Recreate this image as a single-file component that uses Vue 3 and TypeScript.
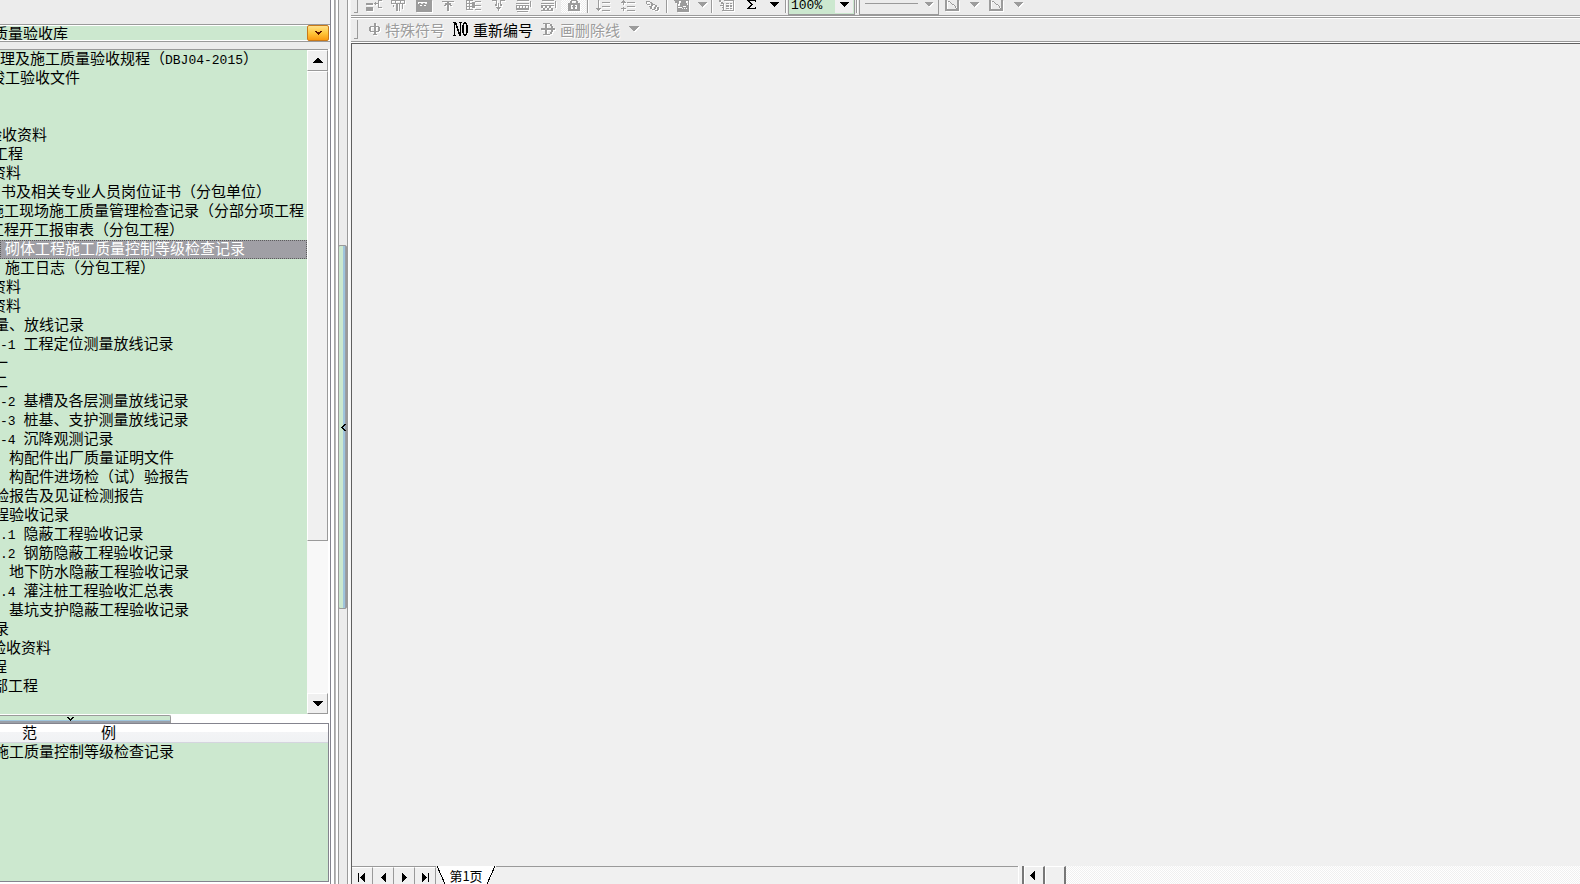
<script setup lang="ts">
import { computed, ref } from 'vue'

interface TreeRow {
  text: string
  indent: number
}

interface Part {
  text: string
  latin: boolean
}

const rows: TreeRow[] = [
  { text: '理及施工质量验收规程（DBJ04-2015）', indent: 0 },
  { text: '竣工验收文件', indent: -10 },
  { text: '', indent: 0 },
  { text: '', indent: 0 },
  { text: '验收资料', indent: -13 },
  { text: '工程', indent: -7 },
  { text: '资料', indent: -9 },
  { text: '书及相关专业人员岗位证书（分包单位）', indent: 1 },
  { text: '施工现场施工质量管理检查记录（分部分项工程', indent: -11 },
  { text: '工程开工报审表（分包工程）', indent: -11 },
  { text: '砌体工程施工质量控制等级检查记录', indent: 5 },
  { text: '施工日志（分包工程）', indent: 5 },
  { text: '资料', indent: -9 },
  { text: '资料', indent: -9 },
  { text: '量、放线记录', indent: -6 },
  { text: '-1 工程定位测量放线记录', indent: 0 },
  { text: '一', indent: -7 },
  { text: '二', indent: -7 },
  { text: '-2 基槽及各层测量放线记录', indent: 0 },
  { text: '-3 桩基、支护测量放线记录', indent: 0 },
  { text: '-4 沉降观测记录', indent: 0 },
  { text: '构配件出厂质量证明文件', indent: 9 },
  { text: '构配件进场检（试）验报告', indent: 9 },
  { text: '验报告及见证检测报告', indent: -6 },
  { text: '程验收记录', indent: -6 },
  { text: '.1 隐蔽工程验收记录', indent: 0 },
  { text: '.2 钢筋隐蔽工程验收记录', indent: 0 },
  { text: '地下防水隐蔽工程验收记录', indent: 9 },
  { text: '.4 灌注桩工程验收汇总表', indent: 0 },
  { text: '基坑支护隐蔽工程验收记录', indent: 9 },
  { text: '录', indent: -6 },
  { text: '验收资料', indent: -9 },
  { text: '程', indent: -8 },
  { text: '部工程', indent: -7 },
]

const selected = ref(10)

function split(text: string): Part[] {
  return (text.match(/[\x20-\x7e]+|[^\x20-\x7e]+/g) ?? []).map((t) => ({
    text: t,
    latin: /^[\x20-\x7e]/.test(t),
  }))
}

const tree = computed(() => rows.map((r) => ({ ...r, parts: split(r.text) })))

/* Toolbar glyphs on a 16 x 12 grid */
const editTools = [
  { name: '插入列', d: 'M0 3h7v2H0zM0 7h7v4H0zM8 3h4v1H8zM9 2h1v3H9zM12 0h1v8h-1zM13 0h3v1h-3zM13 7h3v1h-3z' },
  { name: '插入行', d: 'M0 0h14v1H0zM0 3h14v1H0zM0 0h1v4H0zM4 0h1v4H4zM9 0h1v4H9zM13 0h1v4h-1zM5 4h2v7H5zM8 4h1v7H8zM11 4h1v5h-1zM2 5h1v2H2z' },
  { name: '单元格', d: 'M0 0h16v2H0zM0 2h2v2h1V3h2v1h2V3h2v1h2V2h5v10H0zM4 5v1h2V5zM8 5v1h2V5z' },
  { name: '上移', d: 'M1 1h12v1H1zM6 2h2v9H6zM4 3h2v2H4zM8 3h2v2H8zM3 5h2v1H3zM9 5h2v1H9z' },
  { name: '左移', d: 'M0 0h1v10H0zM0 0h7v1H0zM0 3h7v1H0zM0 6h7v1H0zM0 9h7v1H0zM3 0h1v10H3zM6 2h3v6H6zM9 1h6v1H9zM9 5h6v1H9zM9 9h6v1H9z' },
  { name: '下移', d: 'M1 0h5v1H1zM9 0h5v1H9zM5 0h1v5H5zM9 0h1v5H9zM7 3h1v8H7zM5 7h5v1H5zM6 8h3v1H6zM4 4h2v2H4zM9 4h2v2H9z' },
  { name: '上方插入', d: 'M1 0h12v1H1zM0 3h13v1H0zM0 5h13v1H0zM0 6h1v4H0zM3 6h1v4H3zM6 6h1v4H6zM9 6h1v4H9zM12 5h1v5h-1zM0 8h12v2H0zM14 1h1v6h-1zM1 11h11v1H1z' },
  { name: '下方插入', d: 'M1 0h12v1H1zM0 3h13v1H0zM0 5h13v1H0zM0 6h2v2H0zM4 6h2v2H4zM8 6h2v2H8zM2 8h2v2H2zM6 8h2v2H6zM10 8h2v2h-2zM0 10h12v1H0zM14 1h1v7h-1z' },
  { name: '锁定', d: 'M5 0h6v1H5zM4 1h2v2H4zM10 1h2v2h-2zM2 3h12v2H2zM2 5h3v4H2zM11 5h3v4h-3zM2 9h12v2H2zM7 5h2v4H7zM6 6h4v1H6z' },
]

const listTools = [
  { name: '降序', d: 'M3 0h1v11H3zM1 8h5v1H1zM2 9h3v1H2zM7 2h8v1H7zM7 6h8v1H7zM7 10h8v1H7z' },
  { name: '升序', d: 'M3 0h1v5H3zM1 2h5v1H1zM2 1h3v1H2zM3 7h1v4H3zM1 8h5v1H1zM7 2h8v1H7zM7 6h8v1H7zM7 10h8v1H7z' },
  { name: '链接', d: 'M1 1h4v1H1zM1 2h1v2H1zM5 2h2v1H5zM2 4h3v1H2zM6 3h2v3H6zM4 6h3v1H4zM8 4h2v1H8zM5 7h2v2H5zM10 5h2v2h-2zM7 9h3v1H7zM12 7h2v3h-2zM9 7h2v2H9zM10 10h3v1h-3z' },
]
</script>

<template>
  <div class="app">
    <aside class="side">
      <header class="library">
        <label class="sr" for="library">资料库</label>
        <select id="library" class="library-select">
          <option>质量验收库</option>
        </select>
        <button class="library-drop" aria-label="展开">
          <svg width="7" height="4" viewBox="0 0 7 4"><path d="M0 0h2v1h3V0h2v1H6v1H5v1H4v1H3V3H2V2H1V1H0z" /></svg>
        </button>
      </header>

      <section class="tree">
        <ul class="rows">
          <li
            v-for="(row, i) in tree"
            :key="i"
            class="row"
            :class="{ selected: i === selected }"
            @click="selected = i"
          >
            <span class="row-text" :style="{ marginLeft: row.indent + 'px' }"><span
              v-for="(p, k) in row.parts"
              :key="k"
              :class="{ latin: p.latin }"
            >{{ p.text }}</span></span>
          </li>
        </ul>
        <div class="scroll">
          <button class="scroll-btn" aria-label="向上滚动">
            <svg width="10" height="5" viewBox="0 0 10 5"><path d="M4 0h2v1h1v1h1v1h1v1h1v1H0V4h1V3h1V2h1V1h1z" /></svg>
          </button>
          <div class="scroll-thumb"></div>
          <div class="scroll-track"></div>
          <button class="scroll-btn" aria-label="向下滚动">
            <svg width="10" height="5" viewBox="0 0 10 5"><path d="M0 0h10v1H9v1H8v1H7v1H6v1H4V4H3V3H2V2H1V1H0z" /></svg>
          </button>
        </div>
      </section>

      <div class="h-split">
        <button class="h-grip" aria-label="折叠范例">
          <svg width="7" height="4" viewBox="0 0 7 4"><path d="M0 0h2v1h1v1h1V1h1V0h2v1H6v1H5v1H4v1H3V3H2V2H1V1H0z" /></svg>
        </button>
      </div>

      <section class="sample">
        <h2 class="sample-head"><span>范</span><span>例</span></h2>
        <p class="sample-row"><span>施工质量控制等级检查记录</span></p>
      </section>
    </aside>

    <div class="v-split">
      <button class="v-grip" aria-label="折叠侧栏">
        <svg width="5" height="7" viewBox="0 0 5 7"><path d="M3 0h2v1H4v1H3v1H2v1h1v1h1v1h1v1H3V6H2V5H1V4H0V3h1V2h1V1h1z" /></svg>
      </button>
    </div>

    <main class="main">
      <div class="bar top-bar">
        <i class="handle"></i>
        <button v-for="t in editTools" :key="t.name" class="tool" :class="{ dither: t.name === '锁定' }" :aria-label="t.name">
          <svg class="emboss" width="16" height="12" viewBox="0 0 16 12"><path :d="t.d" /></svg>
        </button>
        <i class="sep"></i>
        <button v-for="t in listTools" :key="t.name" class="tool" :aria-label="t.name">
          <svg class="emboss" width="16" height="12" viewBox="0 0 16 12"><path :d="t.d" /></svg>
        </button>
        <i class="sep"></i>
        <button class="tool" aria-label="图片">
          <svg class="emboss" width="16" height="12" viewBox="0 0 16 12">
            <path d="M0 0h3v1H0zM1 1h2v2H1zM3 0h12v1H3zM3 1h2v3H3zM7 1h5v2H7zM14 1h1v11h-1zM3 4h1v8H3zM6 3h7v3H6zM12 5h2v3h-2zM4 6h5v1H4zM4 8h3v1H4zM8 7h4v1H8zM7 8h1v1H7zM9 8h1v1H9zM11 8h1v1h-1zM13 8h1v1h-1zM3 9h12v3H3z" />
          </svg>
        </button>
        <button class="drop" aria-label="图片选项">
          <svg class="emboss" width="10" height="5" viewBox="0 0 10 5"><path d="M0 0h10L5 5z" /></svg>
        </button>
        <i class="sep"></i>
        <button class="tool" aria-label="表单">
          <svg class="emboss" width="16" height="12" viewBox="0 0 16 12">
            <path d="M5 0h10v1H5zM14 0h1v11h-1zM3 10h12v1H3zM0 0h2v2H0zM2 2h2v2H2zM1 5h4v1H1zM4 3h1v7H4zM3 7h2v1H3zM7 3h3v1H7zM11 3h2v1h-2zM7 5h3v2H7zM11 5h2v2h-2zM7 8h3v1H7zM11 8h2v1h-2z" />
          </svg>
        </button>
        <button class="tool" aria-label="求和">
          <svg width="10" height="9" viewBox="0 0 10 9"><path d="M0 0h9v2H8V1H3v1h1v1h1v1h1v1H5v1H4v1H3v1h5V7h1v2H0V8h1V7h1V6h1V5h1V4H3V3H2V2H1V1H0z" /></svg>
        </button>
        <button class="drop wide" aria-label="求和选项">
          <svg width="10" height="5" viewBox="0 0 10 5"><path d="M0 0h10L5 5z" /></svg>
        </button>
        <i class="sep"></i>
        <div class="zoom">
          <label class="sr" for="zoom">显示比例</label>
          <select id="zoom" class="zoom-select"><option>100%</option></select>
          <span class="zoom-drop"><svg width="10" height="5" viewBox="0 0 10 5"><path d="M0 0h10L5 5z" /></svg></span>
        </div>
        <i class="sep"></i>
        <button class="line-style" aria-label="线型">
          <i class="line"></i>
          <svg class="emboss" width="9" height="5" viewBox="0 0 9 5"><path d="M0 0h9L5 5z" /></svg>
        </button>
        <template v-for="n in ['斜线', '反斜线']" :key="n">
          <button class="tool diagonal" :aria-label="n">
            <svg class="emboss" width="14" height="12" viewBox="0 0 14 12">
              <path d="M0 0h2v11H0zM12 0h2v11h-2zM0 9h14v2H0zM3 1h2v1H3zM5 2h1v1H5zM6 3h1v1H6zM7 4h2v1H7zM9 5h1v1H9zM10 6h1v2h-1zM11 8h1v1h-1z" />
            </svg>
          </button>
          <button class="drop diagonal-drop" :aria-label="n + '选项'">
            <svg class="emboss" width="10" height="5" viewBox="0 0 10 5"><path d="M0 0h10L5 5z" /></svg>
          </button>
        </template>
      </div>

      <div class="bar text-bar">
        <i class="handle"></i>
        <button class="cmd off">
          <svg class="emboss" width="11" height="12" viewBox="0 0 11 12">
            <path d="M5 0h2v12H5zM1 3h9v1H1zM0 4h2v4H0zM9 4h2v4H9zM1 8h9v1H1zM4 11h4v1H4z" />
          </svg>
          <span>特殊符号</span>
        </button>
        <button class="cmd">
          <svg width="15" height="14" viewBox="0 0 15 14">
            <path d="M0 0h3v1h1v3h1v3h1v3h1V1H6V0h3v1H8v13H6v-2H5V9H4V6H3V3H2v10h1v1H0v-1h1V1H0z" />
            <path d="M11 0h2v1h1v2h1v8h-1v2h-1v1h-2v-1h-1v-2H9V3h1V1h1zM11 2v10h2V2z" fill-rule="evenodd" />
          </svg>
          <span>重新编号</span>
        </button>
        <button class="cmd off">
          <svg class="emboss" width="14" height="12" viewBox="0 0 14 12">
            <path d="M2 0h7v1H2zM4 1h2v10H4zM2 11h7v1H2zM9 1h2v2H9zM10 3h2v6h-2zM9 9h2v2H9zM0 5h14v2H0z" />
          </svg>
          <span>画删除线</span>
          <svg class="emboss caret" width="10" height="6" viewBox="0 0 10 6"><path d="M0 0h10L5 6z" /></svg>
        </button>
      </div>

      <div class="canvas"></div>

      <footer class="pages">
        <div class="nav">
          <button aria-label="第一页"><svg width="8" height="9" viewBox="0 0 8 9"><path d="M0 0h1v9H0zM7 0v9L2 5V4z" /></svg></button>
          <button aria-label="上一页"><svg width="5" height="9" viewBox="0 0 5 9"><path d="M5 0v9L0 5V4z" /></svg></button>
          <button aria-label="下一页"><svg width="5" height="9" viewBox="0 0 5 9"><path d="M0 0v9l5-4V4z" /></svg></button>
          <button aria-label="最后一页"><svg width="8" height="9" viewBox="0 0 8 9"><path d="M7 0h1v9H7zM1 0v9l5-4V4z" /></svg></button>
        </div>
        <button class="page-tab">
          <svg class="page-shape" width="60" height="18" viewBox="0 0 60 18">
            <path class="fill" d="M1 0h59l-8 18H9z" />
            <path class="edge" d="M1 0l8 18M59 0l-8 18" />
          </svg>
          <span>第1页</span>
        </button>
        <div class="strip"></div>
        <div class="grip"></div>
        <button class="h-btn" aria-label="向左滚动"><svg width="5" height="9" viewBox="0 0 5 9"><path d="M5 0v9L0 5V4z" /></svg></button>
        <div class="h-thumb"></div>
        <div class="h-track"></div>
      </footer>
    </main>
  </div>
</template>

<style>
html,
body {
  margin: 0;
  background: #ececec;
}
</style>

<style scoped>
.app {
  display: flex;
  height: 100vh;
  overflow: hidden;
  font: 15px/19px "Noto Sans CJK SC", sans-serif;
  color: #000;
  background: #ececec;
}
.app * {
  box-sizing: border-box;
}
button,
select {
  margin: 0;
  padding: 0;
  border: 0;
  border-radius: 0;
  background: none;
  font: inherit;
  color: inherit;
  appearance: none;
}
svg {
  display: block;
  flex: none;
  fill: currentColor;
  shape-rendering: crispEdges;
}
.emboss {
  color: #9c9c9c;
  filter: drop-shadow(1px 1px 0 #fff);
}
.sr {
  position: absolute;
  width: 1px;
  height: 1px;
  overflow: hidden;
  clip-path: inset(50%);
}

/* side panel */
.side {
  display: flex;
  flex-direction: column;
  flex: none;
  width: 331px;
  border-right: 1px solid #84848e;
  background: #fff;
}
.library {
  display: flex;
  flex: none;
  height: 49px;
  padding: 24px 1px 7px 0;
  background: linear-gradient(#ececec 24px, #9a9a9a 24px, #9a9a9a 25px, #fff 25px, #fff 41px, #9a9a9a 41px, #9a9a9a 42px, #ececec 42px);
}
.library-select {
  flex: 1;
  height: 14px;
  margin-top: 2px;
  padding: 0;
  text-indent: -7px;
  line-height: 14px;
  background: #cce8cf;
}
.library-drop {
  display: grid;
  place-items: center;
  width: 22px;
  height: 16px;
  margin-top: 1px;
  border: 1px solid #c87a1a;
  border-radius: 2px;
  color: #5a1400;
  background: linear-gradient(#ffe08a, #ffc73c 50%, #fb9a10);
}
.tree {
  display: flex;
  flex: 1;
  min-height: 0;
  margin-right: 2px;
  border-top: 1px solid #9a9a9a;
}
.rows {
  flex: 1;
  min-width: 0;
  margin: 0;
  padding: 0;
  overflow: hidden;
  list-style: none;
  background: #cce8cf;
}
.row {
  height: 19px;
  overflow: hidden;
  line-height: 16px;
  white-space: pre;
}
.row-text {
  display: block;
}
.selected {
  outline: 1px dotted #5c5c5c;
  outline-offset: -1px;
  color: #fff;
  background: #a09fa5;
}
.latin {
  font: 13px/16px "Liberation Mono", monospace;
}
.scroll {
  display: flex;
  flex-direction: column;
  width: 21px;
  background: #f8f8f8;
}
.scroll-btn,
.scroll-thumb {
  border: 1px solid #9a9a9a;
  border-top-color: #fff;
  border-left-color: #fff;
  background: #f0f0f0;
}
.scroll-btn {
  display: grid;
  place-items: center;
  flex: none;
  height: 21px;
}
.scroll-thumb {
  flex: 470;
}
.scroll-track {
  flex: 152;
}
.h-split {
  flex: none;
  height: 9px;
  padding-top: 1px;
}
.h-grip {
  display: grid;
  justify-items: center;
  width: 171px;
  height: 8px;
  padding: 1px 0 0;
  border: 1px solid #9a9a9a;
  border-width: 1px 1px 0 0;
  border-radius: 0 2px 0 0;
  background: linear-gradient(#cce8cf 4px, #9fc4dc 4px, #9fc4dc 5px, #9a9fa8 5px);
}
.h-grip svg {
  margin-right: 29px;
}
.sample {
  flex: none;
  height: 159px;
  margin: 0 1px 2px 0;
  border: 1px solid #84848e;
  border-left: 0;
  background: #cce8cf;
}
.sample-head {
  display: flex;
  gap: 64px;
  height: 19px;
  margin: 0;
  padding-left: 22px;
  border-bottom: 1px solid #d5d5df;
  font: inherit;
  line-height: 16px;
  background: linear-gradient(#fff 8px, #f3f4f6 8px, #f0f2f4);
}
.sample-row {
  height: 19px;
  margin: 0;
  overflow: hidden;
  line-height: 16px;
  white-space: nowrap;
}
.sample-row span {
  margin-left: -6px;
}

/* splitter */
.v-split {
  display: flex;
  align-items: center;
  flex: none;
  width: 20px;
  padding: 0 0 30px 7px;
  background: linear-gradient(90deg, #fff 3px, #9a9a9a 3px, #c4c4c4 5px, #fff 5px, #fff 7px, #9a9a9a 7px, #9a9a9a 8px, #ececec 8px, #ececec 16px, #9a9a9a 16px, #9a9a9a 17px, #fff 17px, #f4f4f4 20px);
}
.v-grip {
  display: grid;
  align-items: center;
  justify-items: center;
  width: 9px;
  height: 364px;
  padding-left: 1px;
  border: 1px solid #9a9a9a;
  border-radius: 2px;
  background: linear-gradient(90deg, #cce8cf 4px, #9fc4dc 4px, #9fc4dc 6px, #9a9fa8 6px);
}

/* toolbars */
.main {
  display: flex;
  flex-direction: column;
  flex: 1;
  min-width: 0;
}
.bar {
  display: flex;
  flex: none;
}
.top-bar {
  height: 17px;
  border-bottom: 1px solid #fff;
  box-shadow: inset 0 -1px #9a9a9a;
}
.text-bar {
  align-items: center;
  gap: 8px;
  height: 26px;
  padding-bottom: 2px;
  border-top: 1px solid #9a9a9a;
  border-bottom: 1px solid #fff;
  box-shadow: inset 0 1px #fff, inset 0 -1px #9a9a9a;
}
.handle {
  flex: none;
  width: 4px;
  height: 13px;
  margin: 0 3px;
  border: 1px solid #9a9a9a;
  border-width: 0 1px 1px 0;
}
.text-bar .handle {
  height: 19px;
}
.tool {
  display: flex;
  justify-content: center;
  flex: none;
  width: 25px;
  height: 13px;
}
.dither {
  background: repeating-conic-gradient(#fff 0 25%, #ececec 0 50%) 0 0 / 2px 2px;
}
.drop {
  display: flex;
  justify-content: center;
  flex: none;
  width: 16px;
  height: 13px;
  padding-top: 2px;
}
.wide {
  width: 20px;
}
.sep {
  flex: none;
  width: 2px;
  height: 13px;
  margin: 0 1px;
  border-left: 1px solid #9a9a9a;
  background: #fff;
}
.zoom {
  display: flex;
  flex: none;
  width: 67px;
  height: 15px;
  border: 1px solid #9a9a9a;
  border-top: 0;
  background: #cce8cf;
}
.zoom-select {
  width: 46px;
  height: 12px;
  padding-left: 2px;
  font: 13px/12px "Liberation Mono", monospace;
}
.zoom-drop {
  display: flex;
  justify-content: center;
  width: 18px;
  height: 13px;
  padding-top: 2px;
  background: #f0f0f0;
}
.line-style {
  display: flex;
  justify-content: space-between;
  flex: none;
  width: 80px;
  height: 15px;
  padding: 2px 5px 0;
  border: 1px solid #9a9a9a;
  border-top: 0;
}
.line {
  width: 53px;
  height: 2px;
  border-bottom: 1px solid #9a9a9a;
}
.diagonal {
  width: 26px;
}
.diagonal-drop {
  width: 18px;
}
.cmd {
  display: flex;
  align-items: center;
  gap: 5px;
  height: 22px;
  white-space: nowrap;
}
.off {
  color: #9c9c9c;
  text-shadow: 1px 1px #fff;
}
.caret {
  margin-left: 4px;
}
.canvas {
  flex: 1;
  border-top: 1px solid #5f5f5f;
  border-left: 1px solid #5f5f5f;
  background: #f0f0f0;
}

/* page tabs */
.pages {
  display: flex;
  flex: none;
  height: 18px;
  border-left: 1px solid #5f5f5f;
  background: #f0f0f0;
}
.nav {
  display: flex;
  border-top: 1px solid #9a9a9a;
}
.nav button {
  display: flex;
  justify-content: center;
  width: 21px;
  padding: 5px 0 0;
  border-top: 1px solid #fff;
  border-right: 1px solid #9a9a9a;
}
.page-tab {
  position: relative;
  flex: none;
  width: 60px;
  height: 18px;
  font-size: 13px;
  line-height: 20px;
}
.page-tab span {
  position: relative;
}
.page-shape {
  position: absolute;
  inset: 0;
}
.fill {
  fill: #fff;
}
.edge {
  fill: none;
  stroke: #000;
}
.strip {
  flex: 523 1 0;
  border-top: 1px solid #9a9a9a;
}
.grip {
  flex: none;
  width: 6px;
  border-right: 2px solid #777;
  border-left: 1px solid #fff;
}
.h-btn,
.h-thumb {
  flex: none;
  width: 21px;
  border: 1px solid #fff;
  border-right: 2px solid #777;
  border-bottom: 0;
}
.h-btn {
  display: flex;
  justify-content: center;
  padding: 4px 3px 0 0;
}
.h-track {
  flex: 515 1 0;
  background: repeating-conic-gradient(#fff 0 25%, #f0f0f0 0 50%) 0 0 / 2px 2px;
}
</style>
